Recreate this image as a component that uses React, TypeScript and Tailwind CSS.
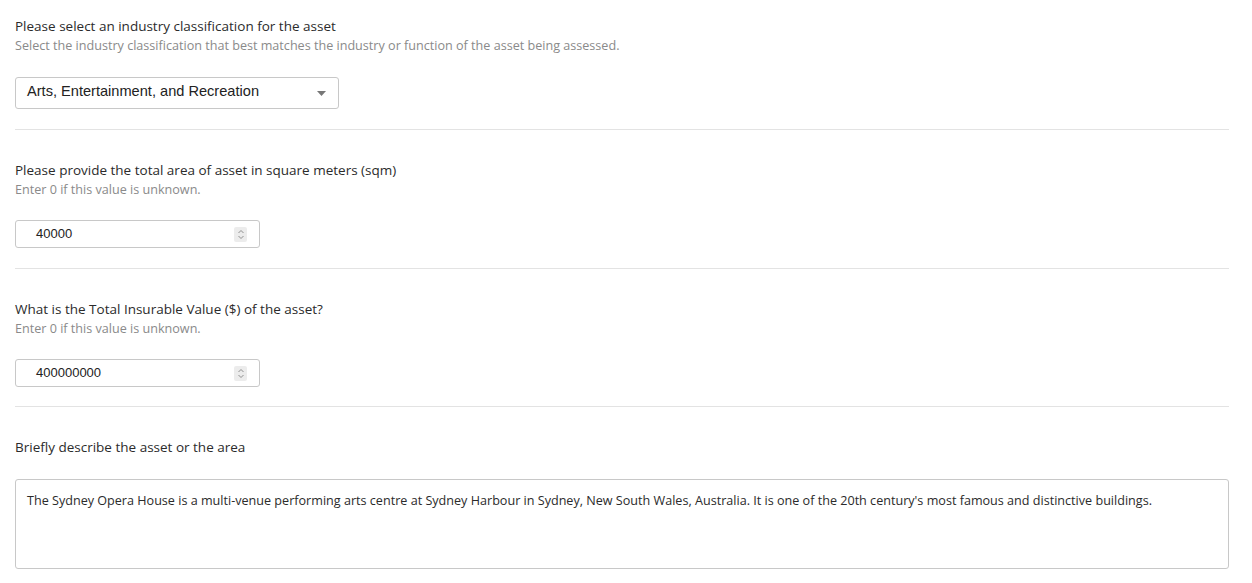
import React from 'react';

const labelFont = { fontFamily: '"Open Sans", "Liberation Sans", sans-serif' };

const Spinner = () => (
  <span className="flex h-[15px] w-[13px] flex-col items-center justify-center rounded-[2px] bg-[#ececec]">
    <svg width="8" height="11" viewBox="0 0 8 11" fill="none" stroke="#8f8f8f" strokeWidth="1">
      <path d="M1.5 4 L4 1.5 L6.5 4" />
      <path d="M1.5 7 L4 9.5 L6.5 7" />
    </svg>
  </span>
);

const NumberField = ({ value }: { value: string }) => (
  <div className="flex h-[28px] w-[245px] items-center justify-between rounded-[3px] border border-[#c8c8c8] bg-white pl-[20px] pr-[12px]">
    <span className="font-['Liberation_Sans',Arial,sans-serif] text-[13px] text-[#222]">{value}</span>
    <Spinner />
  </div>
);

const Question = ({ title, hint }: { title: string; hint?: string }) => (
  <div className="text-[13.5px] leading-[20px]">
    <div className="text-[#2b2b2b]">{title}</div>
    {hint && <div className="text-[12.6px] leading-[20px] text-[#8a8a8a]">{hint}</div>}
  </div>
);

const App = () => {
  return (
    <div className="min-h-screen w-full bg-white" style={labelFont}>
      <div className="ml-[15px] mr-[23px] pt-[16px]">
        {/* industry */}
        <section className="pb-[20px]">
          <Question
            title="Please select an industry classification for the asset"
            hint="Select the industry classification that best matches the industry or function of the asset being assessed."
          />
          <div className="mt-[21px] flex h-[32px] w-[324px] items-center justify-between rounded-[3px] border border-[#c8c8c8] bg-white pl-[11px] pr-[12px]">
            <span className="pb-[3px] font-['Liberation_Sans',Arial,sans-serif] text-[14.6px] text-[#222]">
              Arts, Entertainment, and Recreation
            </span>
            <svg width="9" height="5" viewBox="0 0 9 5">
              <path d="M0 0 L9 0 L4.5 5 Z" fill="#777" />
            </svg>
          </div>
        </section>
        <div className="h-px bg-[#e3e3e3]" />

        {/* area */}
        <section className="pt-[30px] pb-[20px]">
          <Question title="Please provide the total area of asset in square meters (sqm)" hint="Enter 0 if this value is unknown." />
          <div className="mt-[20px]">
            <NumberField value="40000" />
          </div>
        </section>
        <div className="h-px bg-[#e3e3e3]" />

        {/* value */}
        <section className="pt-[30px] pb-[19px]">
          <Question title="What is the Total Insurable Value ($) of the asset?" hint="Enter 0 if this value is unknown." />
          <div className="mt-[20px]">
            <NumberField value="400000000" />
          </div>
        </section>
        <div className="h-px bg-[#e3e3e3]" />

        {/* description */}
        <section className="pt-[30px]">
          <Question title="Briefly describe the asset or the area" />
          <div className="mt-[22px] h-[90px] w-full rounded-[3px] border border-[#c8c8c8] bg-white px-[11px] pt-[11px] text-[12.6px] leading-[20px] text-[#2b2b2b]">
            The Sydney Opera House is a multi-venue performing arts centre at Sydney Harbour in Sydney, New South Wales, Australia. It is one of the 20th century's most famous and distinctive buildings.
          </div>
        </section>
      </div>
    </div>
  );
};

export default App;
